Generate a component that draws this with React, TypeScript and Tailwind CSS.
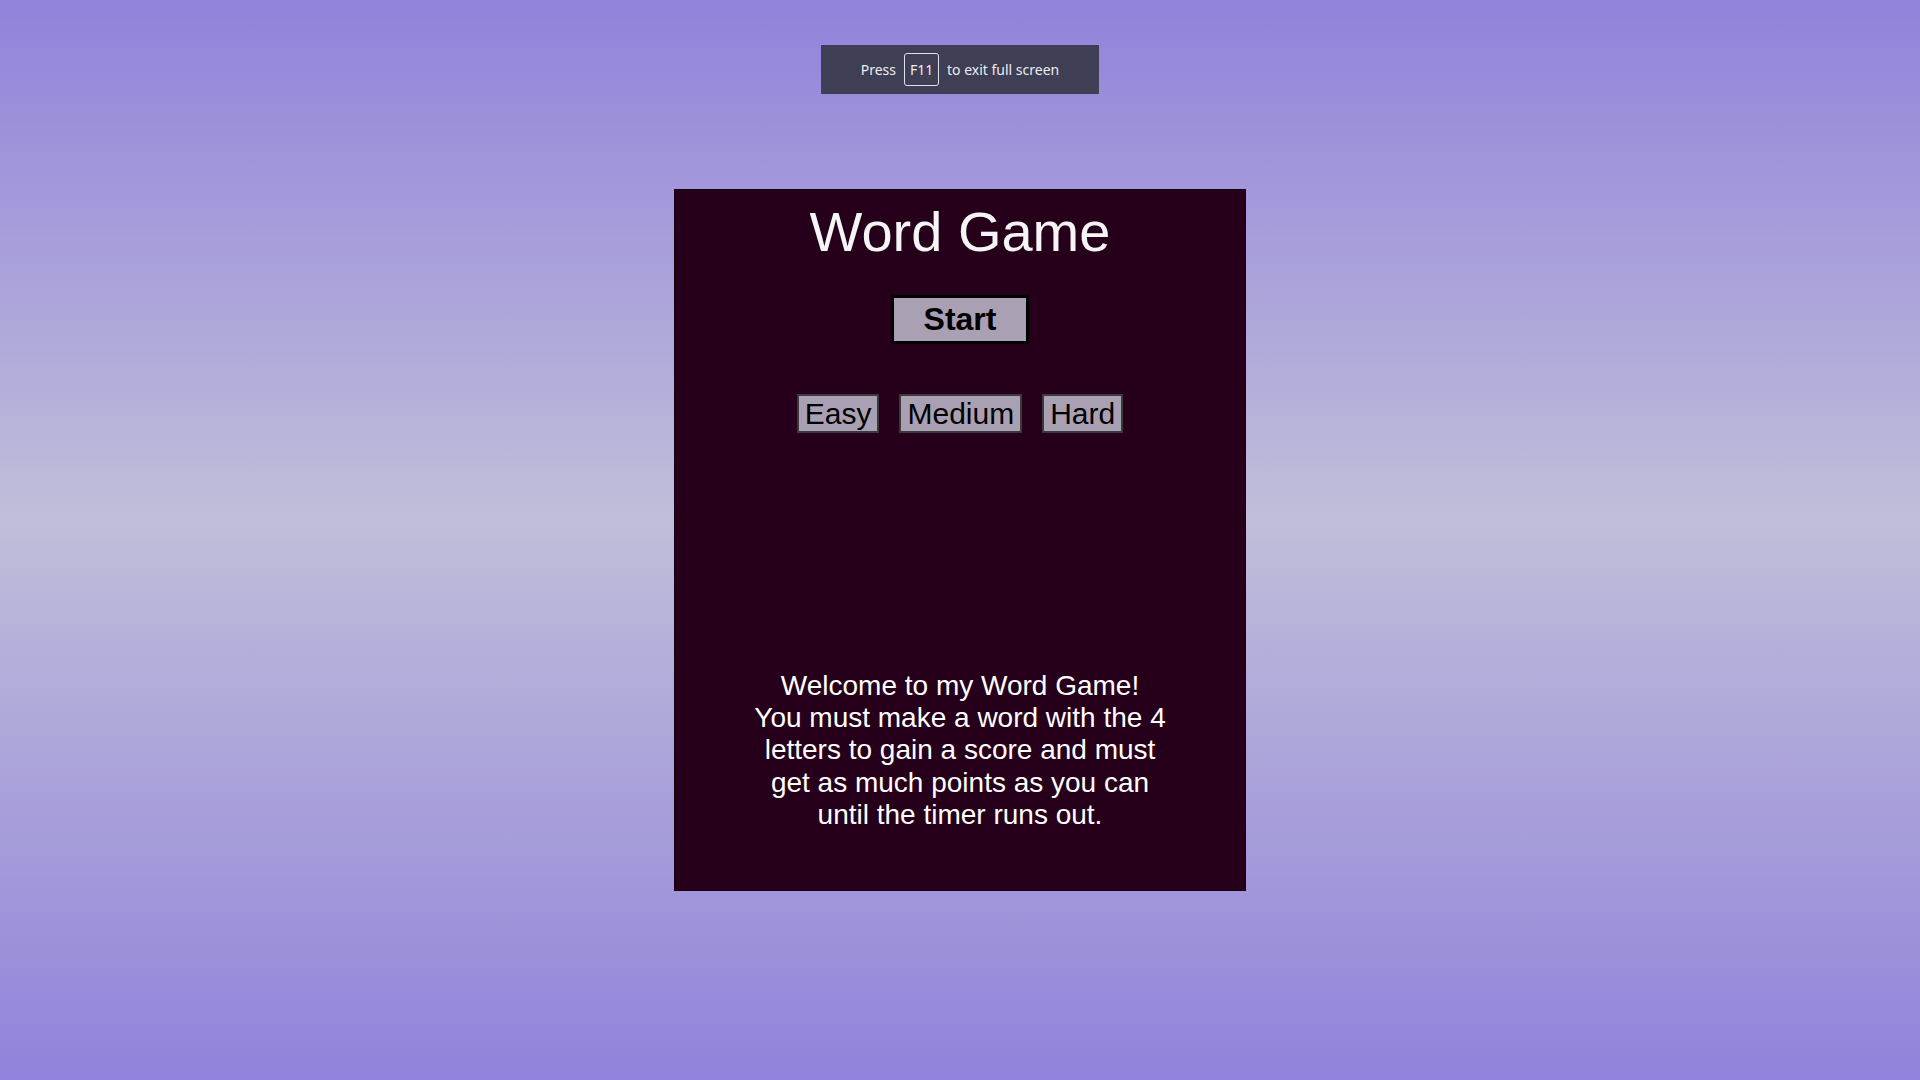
export default function App() {
  return (
    <div className="relative min-h-screen w-full bg-[linear-gradient(to_bottom,#9182db_0%,#c0bed9_48%,#9182db_100%)] font-['Liberation_Sans',Arial,sans-serif]">
      {/* Browser full screen hint */}
      <div className="absolute left-[821px] top-[45px] flex h-[49px] w-[278px] items-center justify-center gap-2 bg-[#3e3e54] font-['Noto_Sans',sans-serif] text-[14px] text-[#ececf2]">
        <span>Press</span>
        <span className="flex h-[33px] w-[35px] items-center justify-center rounded-[3px] border border-[#e0e0e8]">
          F11
        </span>
        <span>to exit full screen</span>
      </div>

      <div className="flex justify-center pt-[189px]">
        <div className="flex h-[702px] w-[572px] flex-col items-center border border-[#170010] bg-[#26001a] pt-[10px]">
          <h1 className="text-[56px] leading-[64px] text-[#f5f5f5]">Word Game</h1>

          <button className="mt-[31px] border-[3px] border-black bg-[#a9a1b3] px-[30px] py-[3px] text-[32px] font-bold leading-[37px] text-black">
            Start
          </button>

          <div className="mt-[50px] flex gap-[20px]">
            <button className="border-2 border-[#3a3a3a] bg-[#a9a1b3] px-[6px] text-[30px] leading-[35px] text-black">
              Easy
            </button>
            <button className="border-2 border-[#3a3a3a] bg-[#a9a1b3] px-[6px] text-[30px] leading-[35px] text-black">
              Medium
            </button>
            <button className="border-2 border-[#3a3a3a] bg-[#a9a1b3] px-[6px] text-[30px] leading-[35px] text-black">
              Hard
            </button>
          </div>

          <p className="mt-[237px] w-[420px] text-center text-[28px] leading-[32.2px] text-white">
            Welcome to my Word Game!
            <br />
            You must make a word with the 4 letters to gain a score and must get as much points as you can until the timer runs out.
          </p>
        </div>
      </div>
    </div>
  );
}
